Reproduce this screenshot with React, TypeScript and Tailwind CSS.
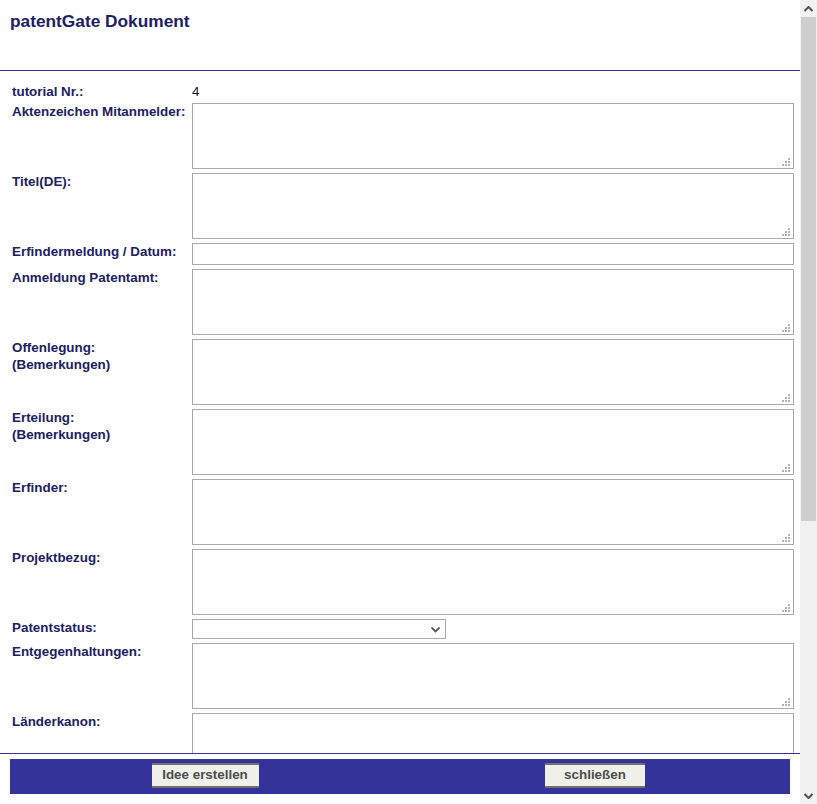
import React from "react";

const font = { fontFamily: '"Liberation Sans", Arial, sans-serif' };

function Grip() {
  return (
    <svg
      width="8"
      height="8"
      viewBox="0 0 8 8"
      className="pointer-events-none absolute bottom-[3px] right-[4px]"
    >
      <g fill="#b4b4b4">
        <rect x="6" y="0" width="2" height="2" />
        <rect x="3" y="3" width="2" height="2" />
        <rect x="6" y="3" width="2" height="2" />
        <rect x="0" y="6" width="2" height="2" />
        <rect x="3" y="6" width="2" height="2" />
        <rect x="6" y="6" width="2" height="2" />
      </g>
    </svg>
  );
}

function Area() {
  return (
    <div className="relative h-[66px]">
      <textarea className="block h-full w-full resize-none border border-[#a9a9a9] bg-white outline-none" />
      <Grip />
    </div>
  );
}

function Label({ children, first }: { children: React.ReactNode; first?: boolean }) {
  return (
    <div
      className={
        first
          ? "h-[17px] pl-[12px] text-[13.4px] font-bold leading-[20px] text-[#202060]"
          : "pl-[12px] text-[13.4px] font-bold leading-[17px] text-[#202060]"
      }
    >
      {children}
    </div>
  );
}

type Field = { label: React.ReactNode; kind: "area" | "input" | "select" | "text" };

const fields: Field[] = [
  { label: "tutorial Nr.:", kind: "text" },
  { label: "Aktenzeichen Mitanmelder:", kind: "area" },
  { label: "Titel(DE):", kind: "area" },
  { label: "Erfindermeldung / Datum:", kind: "input" },
  { label: "Anmeldung Patentamt:", kind: "area" },
  {
    label: (
      <>
        Offenlegung:
        <br />
        (Bemerkungen)
      </>
    ),
    kind: "area",
  },
  {
    label: (
      <>
        Erteilung:
        <br />
        (Bemerkungen)
      </>
    ),
    kind: "area",
  },
  { label: "Erfinder:", kind: "area" },
  { label: "Projektbezug:", kind: "area" },
  { label: "Patentstatus:", kind: "select" },
  { label: "Entgegenhaltungen:", kind: "area" },
  { label: "Länderkanon:", kind: "area" },
];

function Control({ kind }: { kind: Field["kind"] }) {
  if (kind === "text") {
    return <div className="h-[17px] text-[13.4px] leading-[20px] text-[#111133]">4</div>;
  }
  if (kind === "input") {
    return (
      <input className="block h-[22px] w-full border border-[#a9a9a9] bg-white outline-none" />
    );
  }
  if (kind === "select") {
    return (
      <div className="relative h-[20px] w-[254px]">
        <select className="block h-full w-full appearance-none border border-[#a9a9a9] bg-white outline-none">
          <option></option>
        </select>
        <svg
          width="9"
          height="6"
          viewBox="0 0 9 6"
          className="pointer-events-none absolute right-[6px] top-[8px]"
        >
          <path d="M0.5 0.5 L4.5 4.5 L8.5 0.5" fill="none" stroke="#555" strokeWidth="1.8" />
        </svg>
      </div>
    );
  }
  return <Area />;
}

function Scrollbar() {
  return (
    <div className="flex h-full w-[17px] flex-col bg-[#f1f1f1]">
      <div className="flex h-[17px] items-center justify-center">
        <svg width="9" height="6" viewBox="0 0 9 6">
          <path d="M0.5 5 L4.5 1 L8.5 5" fill="none" stroke="#505050" strokeWidth="2" />
        </svg>
      </div>
      <div className="flex flex-1 flex-col">
        <div className="mx-[1px] h-[504px] bg-[#cdcdcd]" />
      </div>
      <div className="flex h-[17px] items-center justify-center">
        <svg width="9" height="6" viewBox="0 0 9 6">
          <path d="M0.5 1 L4.5 5 L8.5 1" fill="none" stroke="#505050" strokeWidth="2" />
        </svg>
      </div>
    </div>
  );
}

function Button({ children, width }: { children: React.ReactNode; width: string }) {
  return (
    <button
      className={`h-[25px] border-y-2 border-[#707070] bg-[#f0f0eb] text-[13.4px] font-bold text-[#4d4d4d] ${width}`}
    >
      {children}
    </button>
  );
}

export default function App() {
  return (
    <div className="flex h-[804px] w-[817px] overflow-hidden bg-white" style={font}>
      <div className="flex h-full w-[800px] flex-col">
        <header className="h-[71px] border-b border-[#333399] px-[10px] pt-[11px]">
          <h1 className="text-[17.3px] font-bold leading-[20px] text-[#202060]">
            patentGate Dokument
          </h1>
        </header>

        <main className="flex-1 overflow-hidden pt-[11px]">
          <div className="grid grid-cols-[192px_602px] gap-y-[4px]">
            {fields.map((f, i) => (
              <React.Fragment key={i}>
                <Label first={i === 0}>{f.label}</Label>
                <Control kind={f.kind} />
              </React.Fragment>
            ))}
          </div>
        </main>

        <footer className="h-[51px] border-t border-[#333399] bg-white px-[10px] pt-[5px]">
          <div className="grid h-[35px] grid-cols-2 bg-[#333399] pt-[4px]">
            <div className="flex justify-center">
              <Button width="w-[107px]">Idee erstellen</Button>
            </div>
            <div className="flex justify-center">
              <Button width="w-[100px]">schließen</Button>
            </div>
          </div>
        </footer>
      </div>
      <Scrollbar />
    </div>
  );
}
